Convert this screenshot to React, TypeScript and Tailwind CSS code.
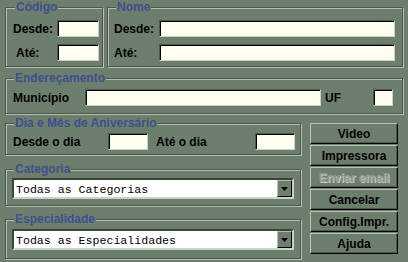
const groupBox =
  "border border-[#4c584b] shadow-[inset_1px_1px_0_#b3bfb1,1px_1px_0_#b3bfb1]";
const legendCls =
  "px-[1px] bg-[#6e7e6d] text-[12px] leading-[14px] font-bold text-[#3e4f8e]";
const inputCls =
  "h-[17px] bg-[#fffff0] border border-t-[#4c584b] border-l-[#4c584b] border-r-[#c8d2c6] border-b-[#c8d2c6] shadow-[inset_1px_1px_0_#000]";
const labelCls = "text-[12px] font-bold text-black leading-[14px]";

function Field({ className }: { className: string }) {
  return <div className={`${inputCls} ${className}`} />;
}

function Combo({ value }: { value: string }) {
  return (
    <div className="flex h-[21px] w-[282px] bg-white border-2 border-t-[#3a4439] border-l-[#3a4439] border-r-[#c8d2c6] border-b-[#c8d2c6]">
      <span className="flex-1 pl-[2px] pt-[2px] font-['Liberation_Mono',monospace] text-[11.6px] leading-[15px] text-black">
        {value}
      </span>
      <span className="flex w-[15px] items-center justify-center bg-[#6e7e6d] border border-t-[#b3bfb1] border-l-[#b3bfb1] border-r-black border-b-black">
        <svg width="7" height="4" viewBox="0 0 7 4">
          <path d="M0 0h7L3.5 4z" fill="#000" />
        </svg>
      </span>
    </div>
  );
}

function Btn({ label, disabled }: { label: string; disabled?: boolean }) {
  return (
    <button
      className={`h-[21px] w-[88px] bg-[#6e7e6d] border border-t-[#b8c4b6] border-l-[#b8c4b6] border-r-black border-b-black shadow-[inset_-1px_-1px_0_#4c584b] text-[12px] font-bold leading-[14px] ${
        disabled
          ? "text-[#929f90] [text-shadow:1px_1px_0_#c6d0c4]"
          : "text-black"
      }`}
    >
      {label}
    </button>
  );
}

export default function App() {
  return (
    <div className="w-[408px] h-[262px] overflow-hidden bg-[#6e7e6d] px-[5px] font-['Liberation_Sans',Arial,sans-serif]">
      <div className="flex gap-[4px] h-[67px]">
        <fieldset className={`${groupBox} w-[98px] h-[67px]`}>
          <legend className={`${legendCls} ml-[9px]`}>Código</legend>
          <div className="flex flex-col gap-[7px] pt-[6px] pl-[7px]">
            <div className="flex items-center">
              <span className={`${labelCls} w-[44px]`}>Desde:</span>
              <Field className="w-[42px]" />
            </div>
            <div className="flex items-center">
              <span className={`${labelCls} w-[44px] pl-[3px]`}>Até:</span>
              <Field className="w-[42px]" />
            </div>
          </div>
        </fieldset>
        <fieldset className={`${groupBox} flex-1 h-[67px]`}>
          <legend className={`${legendCls} ml-[8px]`}>Nome</legend>
          <div className="flex flex-col gap-[7px] pt-[6px] pl-[6px] pr-[7px]">
            <div className="flex items-center">
              <span className={`${labelCls} w-[45px]`}>Desde:</span>
              <Field className="flex-1" />
            </div>
            <div className="flex items-center">
              <span className={`${labelCls} w-[45px]`}>Até:</span>
              <Field className="flex-1" />
            </div>
          </div>
        </fieldset>
      </div>

      <fieldset className={`${groupBox} mt-[4px] h-[43px]`}>
        <legend className={`${legendCls} ml-[8px]`}>Endereçamento</legend>
        <div className="flex items-center pt-[4px] pl-[7px]">
          <span className={`${labelCls} w-[72px]`}>Município</span>
          <Field className="w-[236px]" />
          <span className={`${labelCls} w-[52px] pl-[4px]`}>UF</span>
          <Field className="w-[20px]" />
        </div>
      </fieldset>

      <div className="flex gap-[9px] mt-[2px]">
        <div className="flex flex-col w-[296px]">
          <fieldset className={`${groupBox} h-[39px]`}>
            <legend className={`${legendCls} ml-[8px]`}>
              Dia e Mês de Aniversário
            </legend>
            <div className="flex items-center pt-[3px] pl-[7px]">
              <span className={`${labelCls} w-[95px]`}>Desde o dia</span>
              <Field className="w-[40px]" />
              <span className={`${labelCls} w-[107px] pl-[8px]`}>Até o dia</span>
              <Field className="w-[40px]" />
            </div>
          </fieldset>
          <fieldset className={`${groupBox} mt-[7px] h-[44px]`}>
            <legend className={`${legendCls} ml-[8px]`}>Categoria</legend>
            <div className="pt-[2px] pl-[6px]">
              <Combo value="Todas as Categorias" />
            </div>
          </fieldset>
          <fieldset className={`${groupBox} mt-[6px] h-[47px]`}>
            <legend className={`${legendCls} ml-[8px]`}>Especialidade</legend>
            <div className="pt-[3px] pl-[6px]">
              <Combo value="Todas as Especialidades" />
            </div>
          </fieldset>
        </div>
        <div className="flex flex-col gap-[1px] pt-[7px]">
          <Btn label="Video" />
          <Btn label="Impressora" />
          <Btn label="Enviar email" disabled />
          <Btn label="Cancelar" />
          <Btn label="Config.Impr." />
          <Btn label="Ajuda" />
        </div>
      </div>
    </div>
  );
}
